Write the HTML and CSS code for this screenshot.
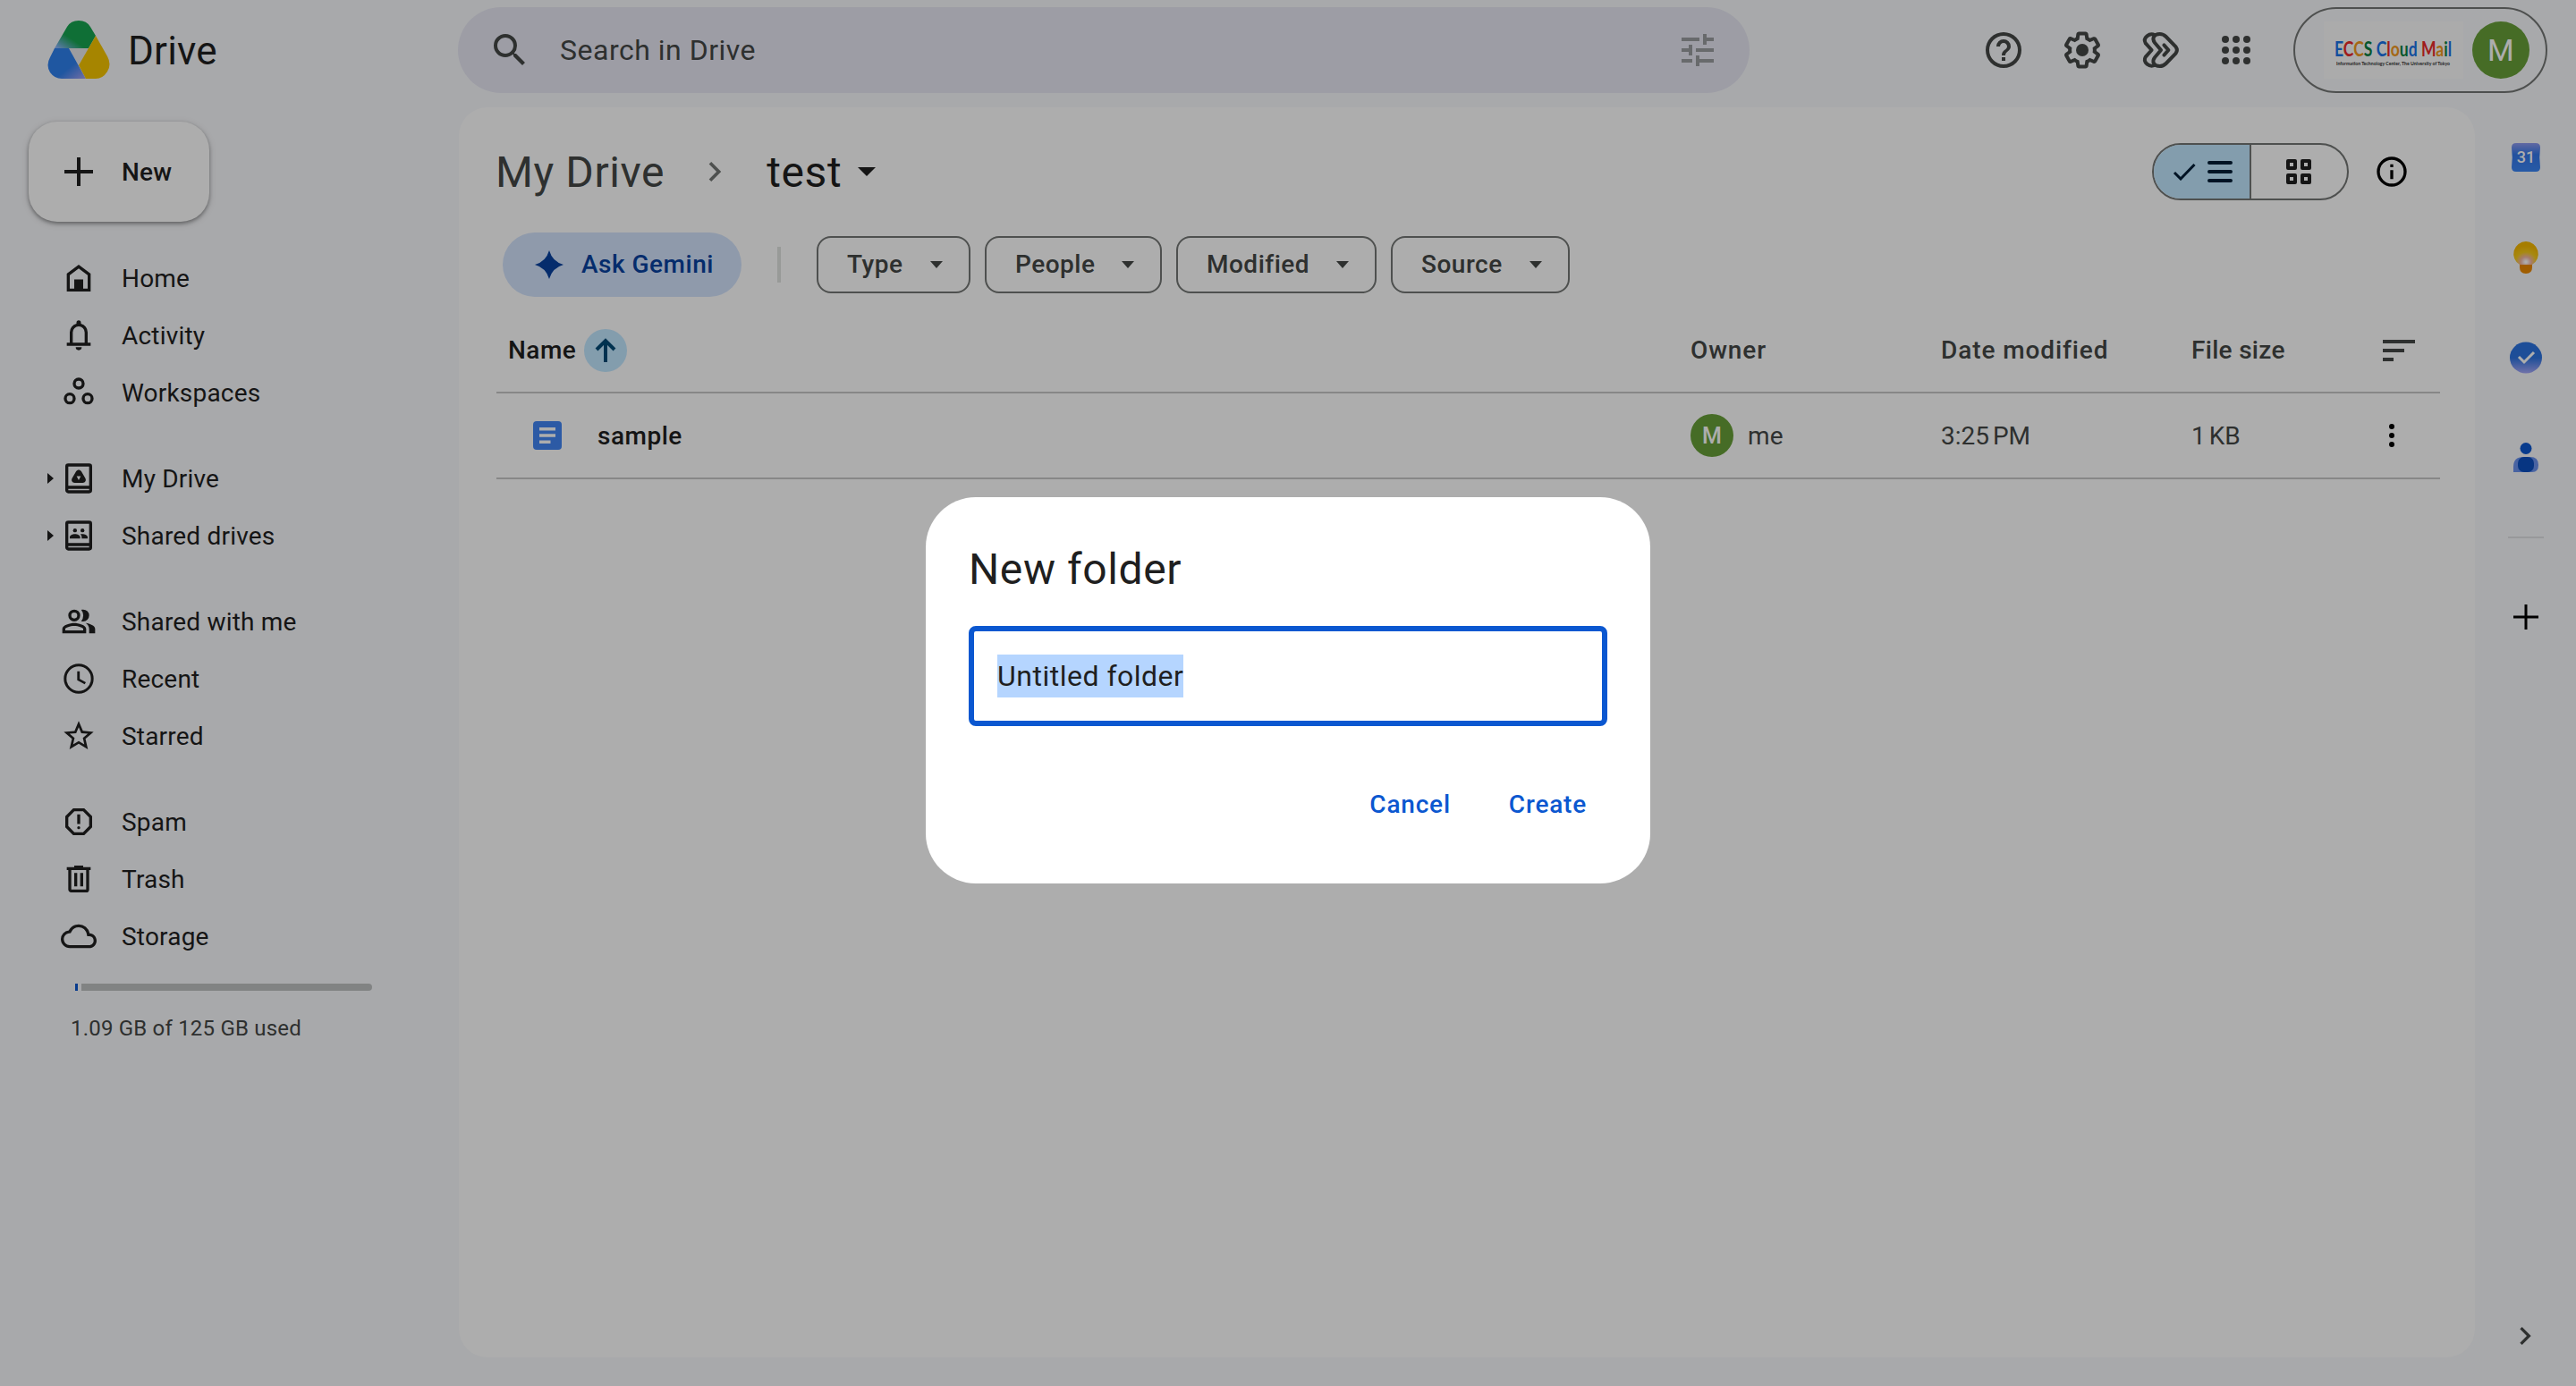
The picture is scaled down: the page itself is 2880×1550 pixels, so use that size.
FILE: index.html
```html
<!DOCTYPE html>
<html lang="en">
<head>
  <meta charset="UTF-8" />
  <meta name="viewport" content="width=device-width, initial-scale=1.0"/>
  <title>test - Google Drive</title>
  <link rel="stylesheet" href="styles.css">
</head>
<body>

  <header class="topbar">
    <div class="brand">
      <svg class="brand-logo" viewBox="0 0 70 66">
        <defs>
          <linearGradient id="gBlue" x1="0" y1="0" x2="1" y2="1">
            <stop offset="0.6" stop-color="#2f80ed"/>
            <stop offset="1" stop-color="#a9a4f5"/>
          </linearGradient>
          <linearGradient id="gGreen" x1="0" y1="1" x2="0.5" y2="0.5">
            <stop offset="0.1" stop-color="#86b4f8"/>
            <stop offset="0.75" stop-color="#17a450"/>
          </linearGradient>
        </defs>
        <path fill="#e8e8ea" d="M24 31h22L35 50z"/>
        <path fill="url(#gGreen)" d="M8 31 L22 7 Q26 0 35 0 Q44 0 48 7 L54 17 L46 31 Z"/>
        <path fill="url(#gBlue)" d="M8 31 H24 L43 65 H16 Q8 65 3 58 Q-2 50 3 41 Z"/>
        <path fill="#f5c400" d="M54 17 L67 40 Q72 49 67 57 Q62 65 54 65 H43 L35 50 Z"/>
      </svg>
      <span class="brand-name">Drive</span>
    </div>

    <div class="search">
      <svg class="icon" viewBox="0 0 24 24"><path d="M15.5 14h-.79l-.28-.27A6.47 6.47 0 0 0 16 9.5 6.5 6.5 0 1 0 9.5 16c1.61 0 3.09-.59 4.23-1.57l.27.28v.79l5 4.99L20.49 19l-4.99-5zm-6 0C7.01 14 5 11.99 5 9.5S7.01 5 9.5 5 14 7.01 14 9.5 11.99 14 9.5 14z"/></svg>
      <span class="search-text">Search in Drive</span>
      <svg class="icon tune" viewBox="0 0 24 24"><path d="M3 17v2h6v-2H3zM3 5v2h10V5H3zm10 16v-2h8v-2h-8v-2h-2v6h2zM7 9v2H3v2h4v2h2V9H7zm14 4v-2H11v2h10zm-6-4h2V7h4V5h-4V3h-2v6z"/></svg>
    </div>

    <div class="tools">
      <svg class="icon" viewBox="0 0 24 24"><path d="M11 18h2v-2h-2v2zm1-16a10 10 0 1 0 0 20 10 10 0 0 0 0-20zm0 18a8 8 0 1 1 0-16 8 8 0 0 1 0 16zm0-14a4 4 0 0 0-4 4h2c0-1.1.9-2 2-2s2 .9 2 2c0 2-3 1.75-3 5h2c0-2.25 3-2.5 3-5a4 4 0 0 0-4-4z"/></svg>
      <svg class="icon" viewBox="0 0 24 24"><path d="M13.85 22.25h-3.7c-.74 0-1.36-.54-1.45-1.27l-.27-1.89c-.27-.14-.53-.29-.79-.46l-1.8.72c-.7.26-1.47-.03-1.81-.65L2.2 15.53c-.35-.66-.2-1.44.36-1.88l1.53-1.19c-.01-.15-.02-.3-.02-.46 0-.15.01-.31.02-.46l-1.52-1.19c-.59-.45-.74-1.26-.37-1.88l1.85-3.19c.34-.62 1.11-.9 1.79-.63l1.81.73c.26-.17.52-.32.78-.46l.27-1.91c.09-.7.71-1.25 1.44-1.25h3.7c.74 0 1.36.54 1.45 1.27l.27 1.89c.27.14.53.29.79.46l1.8-.72c.71-.26 1.48.03 1.82.65l1.84 3.18c.36.66.2 1.44-.36 1.88l-1.52 1.19c.01.15.02.3.02.46s-.01.31-.02.46l1.52 1.19c.56.45.72 1.23.37 1.86l-1.86 3.22c-.34.62-1.11.9-1.8.63l-1.8-.72c-.26.17-.52.32-.78.46l-.27 1.91c-.1.68-.72 1.22-1.46 1.22zm-3.23-2h2.76l.37-2.55.53-.22c.44-.18.88-.44 1.34-.78l.45-.34 2.38.96 1.38-2.4-2.03-1.58.07-.56c.03-.26.06-.51.06-.78s-.03-.53-.06-.78l-.07-.56 2.03-1.58-1.39-2.4-2.39.96-.45-.35c-.42-.32-.87-.58-1.33-.77l-.52-.22-.37-2.55h-2.76l-.37 2.55-.53.21c-.44.19-.88.44-1.34.79l-.45.33-2.38-.95-1.39 2.39 2.03 1.58-.07.56a7 7 0 0 0-.06.79c0 .26.02.53.06.78l.07.56-2.03 1.58 1.38 2.4 2.39-.96.45.35c.43.33.86.58 1.33.77l.53.22.38 2.55z"/><circle cx="12" cy="12" r="3.5"/></svg>
      <svg class="icon line" viewBox="0 0 24 24"><path d="M8.600 3.600C5.600 2.200 1.600 5 3.400 8.200L6.800 12l-3.400 3.800c-1.800 3.200 2.200 6 5.200 4.600"/><path d="M12 12 8.600 8C6.500 5.400 8.300 3 11.300 3c1.600 0 2.500.5 3.500 1.500l5.500 5.700q1.300 1.800 0 3.600l-5.500 5.700c-1 1-1.900 1.500-3.500 1.500-3 0-4.800-2.400-2.700-5z"/><path d="M13.700 9.200l2.500 2.800-2.500 2.800"/></svg>
      <svg class="icon" viewBox="0 0 24 24"><circle cx="6" cy="6" r="2"/><circle cx="12" cy="6" r="2"/><circle cx="18" cy="6" r="2"/><circle cx="6" cy="12" r="2"/><circle cx="12" cy="12" r="2"/><circle cx="18" cy="12" r="2"/><circle cx="6" cy="18" r="2"/><circle cx="12" cy="18" r="2"/><circle cx="18" cy="18" r="2"/></svg>
    </div>

    <div class="account">
      <svg class="org-logo" viewBox="0 0 156 64">
        <text x="12" y="39" font-size="22" font-weight="700" textLength="131" lengthAdjust="spacingAndGlyphs"><tspan fill="#1a73e8">E</tspan><tspan fill="#ea2a2a">C</tspan><tspan fill="#f29a1f">C</tspan><tspan fill="#0b8043">S</tspan> <tspan fill="#1a73e8">C</tspan><tspan fill="#ea2a2a">l</tspan><tspan fill="#f29a1f">o</tspan><tspan fill="#0b8043">u</tspan><tspan fill="#1a73e8">d</tspan> <tspan fill="#ea2a2a">M</tspan><tspan fill="#f29a1f">a</tspan><tspan fill="#0b8043">i</tspan><tspan fill="#1a73e8">l</tspan></text>
        <text x="14" y="49" font-size="5.500" font-weight="700" fill="#333" textLength="127" lengthAdjust="spacingAndGlyphs">Information Technology Center, The University of Tokyo</text>
      </svg>
      <span class="avatar">M</span>
    </div>
  </header>

  <div class="layout">
    <aside class="sidebar">
      <button class="new-btn">
        <svg class="icon" viewBox="0 0 24 24"><path d="M20 13h-7v7h-2v-7H4v-2h7V4h2v7h7v2z"/></svg>
        New
      </button>

      <nav class="nav-group">
        <a class="nav-item"><svg class="icon" viewBox="0 0 24 24"><path d="M12 3 4 9v12h16V9l-8-6zm6 16h-3v-6H9v6H6v-9l6-4.500 6 4.500v9z"/><path d="M9 13h6v7H9z"/></svg>Home</a>
        <a class="nav-item"><svg class="icon" viewBox="0 0 24 24"><path d="M4 19v-2h2v-7a6 6 0 0 1 4.500-5.800V3.500a1.500 1.500 0 0 1 3 0v.7A6 6 0 0 1 18 10v7h2v2H4zm8 3a2 2 0 0 1-2-2h4a2 2 0 0 1-2 2zm-4-5h8v-7a4 4 0 0 0-8 0v7z"/></svg>Activity</a>
        <a class="nav-item"><svg class="icon line" viewBox="0 0 24 24"><circle cx="12" cy="6" r="3"/><circle cx="6" cy="16" r="3"/><circle cx="18" cy="16" r="3"/></svg>Workspaces</a>
      </nav>

      <nav class="nav-group">
        <a class="nav-item expandable"><svg class="icon" viewBox="0 0 24 24"><path d="M19 2H5a2 2 0 0 0-2 2v16c0 1.100.9 2 2 2h14a2 2 0 0 0 2-2V4a2 2 0 0 0-2-2zm0 18H5v-1h14v1zm0-3H5V4h14v13z"/><path fill-rule="evenodd" d="M10.300 7.200c.8-1.300 2.600-1.300 3.400 0l2.700 4.700c.9 1.500-.1 3.100-1.700 3.100H9.300c-1.600 0-2.600-1.600-1.700-3.100zM10.600 10.500l1.400 2.700 1.400-2.700z"/></svg>My Drive</a>
        <a class="nav-item expandable"><svg class="icon" viewBox="0 0 24 24"><path d="M19 2H5a2 2 0 0 0-2 2v16c0 1.100.9 2 2 2h14a2 2 0 0 0 2-2V4a2 2 0 0 0-2-2zm0 18H5v-1h14v1zm0-3H5V4h14v13z"/><circle cx="9.500" cy="8.500" r="1.300"/><circle cx="14.500" cy="8.500" r="1.300"/><path d="M6 14v-.8c0-1.500 1.800-2.200 3.500-2.200s3.500.7 3.500 2.200v.8zM14 14v-1c0-.8-.3-1.400-.9-1.900 2.200-.4 4.900.4 4.900 2.100v.8z"/></svg>Shared drives</a>
      </nav>

      <nav class="nav-group">
        <a class="nav-item"><svg class="icon" viewBox="0 0 24 24"><path d="M9 12a4 4 0 1 0 0-8 4 4 0 0 0 0 8zm0-6a2 2 0 1 1 0 4 2 2 0 0 1 0-4zm0 7c-2.700 0-8 1.300-8 4v3h16v-3c0-2.700-5.300-4-8-4zm6 5H3v-1c0-.7 3.200-2 6-2s6 1.300 6 2v1zM15 12a4 4 0 0 0 0-8c-.5 0-.9.100-1.300.2a6 6 0 0 1 0 7.600c.4.100.8.2 1.300.2zM16.700 13.100C18 14 19 15.300 19 17v3h4v-3c0-2.200-3.500-3.500-6.300-3.900z"/></svg>Shared with me</a>
        <a class="nav-item"><svg class="icon" viewBox="0 0 24 24"><path d="M12 2a10 10 0 1 0 0 20 10 10 0 0 0 0-20zm0 18.200a8.200 8.200 0 1 1 0-16.400 8.200 8.200 0 0 1 0 16.400zM12.700 7H11v6l5 2.700.8-1.300-4.100-2.300V7z"/></svg>Recent</a>
        <a class="nav-item"><svg class="icon" viewBox="0 0 24 24"><path d="m22 9.240-7.190-.62L12 2 9.190 8.630 2 9.240l5.460 4.730L5.820 21 12 17.270 18.180 21l-1.630-7.030L22 9.240zM12 15.400l-3.760 2.270 1-4.280-3.320-2.880 4.380-.38L12 6.100l1.710 4.040 4.380.38-3.320 2.880 1 4.280L12 15.400z"/></svg>Starred</a>
      </nav>

      <nav class="nav-group">
        <a class="nav-item"><svg class="icon" viewBox="0 0 24 24"><path d="M15.730 3H8.270L3 8.270v7.460L8.270 21h7.460L21 15.730V8.270L15.730 3zM19 14.900 14.900 19H9.100L5 14.900V9.100L9.100 5h5.800L19 9.100v5.800zM11 7h2v6.500h-2z"/><circle cx="12" cy="16" r="1"/></svg>Spam</a>
        <a class="nav-item"><svg class="icon" viewBox="0 0 24 24"><path d="M15 4V3H9v1H4v2h1v13c0 1.100.9 2 2 2h10a2 2 0 0 0 2-2V6h1V4h-5zm2 15H7V6h10v13zM9 8h2v9H9zm4 0h2v9h-2z"/></svg>Trash</a>
        <a class="nav-item"><svg class="icon" viewBox="0 0 24 24"><path d="M19.350 10.040A7.490 7.490 0 0 0 12 4C9.110 4 6.600 5.640 5.350 8.040A5.994 5.994 0 0 0 0 14c0 3.310 2.690 6 6 6h13c2.760 0 5-2.240 5-5 0-2.640-2.050-4.780-4.650-4.960zM19 18H6c-2.210 0-4-1.790-4-4 0-2.050 1.530-3.760 3.560-3.970l1.070-.11.5-.95A5.469 5.469 0 0 1 12 6c2.620 0 4.880 1.860 5.390 4.430l.3 1.500 1.530.11A2.980 2.980 0 0 1 22 15c0 1.650-1.350 3-3 3z"/></svg>Storage</a>
      </nav>

      <div class="quota">
        <div class="quota-bar"><span class="quota-used"></span><span class="quota-free"></span></div>
        <div class="quota-text">1.09 GB of 125 GB used</div>
      </div>
    </aside>

    <main class="panel">
      <div class="path">
        <span class="crumb">My Drive</span>
        <svg class="crumb-sep" viewBox="0 0 24 24"><path d="M9.400 18 8 16.600l4.600-4.600L8 7.400 9.400 6l6 6z"/></svg>
        <span class="crumb current">test</span>
        <span class="caret big"></span>
        <div class="view-toggle">
          <div class="view active">
            <svg class="check" viewBox="0 0 26 20"><path d="M2 11l7 7L24.500 2"/></svg>
            <svg class="list" viewBox="0 0 28 24"><path d="M2 2h24M2 12h24M2 22h24"/></svg>
          </div>
          <div class="view">
            <svg class="grid" viewBox="0 0 28 28"><rect x="2" y="2" width="8" height="8"/><rect x="18" y="2" width="8" height="8"/><rect x="2" y="18" width="8" height="8"/><rect x="18" y="18" width="8" height="8"/></svg>
          </div>
        </div>
        <svg class="info" viewBox="0 0 24 24"><path d="M11 7h2v2h-2zm0 4h2v6h-2zm1-9a10 10 0 1 0 0 20 10 10 0 0 0 0-20zm0 18a8 8 0 1 1 0-16 8 8 0 0 1 0 16z"/></svg>
      </div>

      <div class="filters">
        <button class="gemini">
          <svg viewBox="0 0 32 32"><path d="M16 0Q19.500 12.500 32 16 19.500 19.500 16 32 12.500 19.500 0 16 12.500 12.500 16 0z"/></svg>
          <span>Ask Gemini</span>
        </button>
        <span class="divider"></span>
        <button class="chip type"><span>Type</span><i class="caret"></i></button>
        <button class="chip people"><span>People</span><i class="caret"></i></button>
        <button class="chip modified"><span>Modified</span><i class="caret"></i></button>
        <button class="chip source"><span>Source</span><i class="caret"></i></button>
      </div>

      <div class="row head">
        <div class="name"><span>Name</span>
          <span class="sort-dir"><svg viewBox="0 0 24 28"><path d="M12 27V3M2 13 12 3l10 10"/></svg></span>
        </div>
        <div>Owner</div>
        <div>Date modified</div>
        <div class="size">File size</div>
        <svg class="sort" viewBox="0 0 36 24"><path d="M0 0h36v4H0zM0 10h24v4H0zM0 20h12v4H0z"/></svg>
      </div>
      <div class="row file">
        <div class="name">
          <svg class="doc" viewBox="0 0 32 32"><rect width="32" height="32" rx="4" fill="#4285f4"/><path fill="#fff" d="M7 7h18v3.500H7zM7 14.200h18v3.500H7zM7 21.500h12.500V25H7z"/></svg>
          <span>sample</span>
        </div>
        <div class="owner"><span class="avatar small">M</span>me</div>
        <div class="value">3:25 PM</div>
        <div class="value">1 KB</div>
        <svg class="more" viewBox="0 0 6 26"><circle cx="3" cy="3" r="3"/><circle cx="3" cy="13" r="3"/><circle cx="3" cy="23" r="3"/></svg>
      </div>
    </main>

    <aside class="rail">
      <svg class="app" viewBox="0 0 40 40">
        <defs><linearGradient id="gCal" x1="0" y1="0" x2="0" y2="1"><stop offset="0" stop-color="#8f9bf0"/><stop offset="0.4" stop-color="#3478ea"/><stop offset="1" stop-color="#3a85f5"/></linearGradient></defs>
        <path fill="url(#gCal)" d="M9 4h22q5 0 5 5-1.500 11 0 22 0 5-5 5H9q-5 0-5-5 1.500-11 0-22 0-5 5-5z"/>
        <text x="20" y="26" font-size="18" fill="#fff" text-anchor="middle" font-weight="500">31</text>
      </svg>
      <svg class="app" viewBox="0 0 40 40">
        <defs><radialGradient id="gKeep" cx="0.5" cy="0.88" r="0.7"><stop offset="0.05" stop-color="#fff"/><stop offset="0.3" stop-color="#f3b7a5"/><stop offset="0.6" stop-color="#f7cb1b"/><stop offset="1" stop-color="#f5b800"/></radialGradient></defs>
        <path fill="url(#gKeep)" d="M20 2a14 14 0 0 0-7 26h14A14 14 0 0 0 20 2z"/>
        <path fill="#ec8a00" d="M13 28h14v3q0 7-7 7t-7-7z"/>
      </svg>
      <svg class="app" viewBox="0 0 40 40">
        <defs><linearGradient id="gTask" x1="0" y1="0" x2="0" y2="1"><stop offset="0.5" stop-color="#2b73e0"/><stop offset="1" stop-color="#a6a8fa"/></linearGradient></defs>
        <ellipse cx="20" cy="20" rx="18" ry="17.500" fill="url(#gTask)"/>
        <path d="M12 19l6 6 11-11" fill="none" stroke="#fff" stroke-width="3"/>
      </svg>
      <svg class="app" viewBox="0 0 40 40">
        <circle cx="20" cy="9.500" r="6.500" fill="#0b57d0"/>
        <path fill="#6b93ef" d="M6 36v-6q0-11 11-11h8q9 0 9 9 0 8-7 8z"/>
        <rect x="11" y="19" width="18" height="17" rx="7" fill="#0b4fc0"/>
      </svg>
      <span class="rail-line"></span>
      <svg class="rail-plus" viewBox="0 0 28 28"><path d="M12.500 0h3v12.500H28v3H15.500V28h-3V15.500H0v-3h12.500z"/></svg>
      <svg class="rail-collapse" viewBox="0 0 24 24"><path d="M9.400 18 8 16.600l4.600-4.600L8 7.400 9.400 6l6 6z"/></svg>
    </aside>
  </div>

  <div class="scrim">
    <div class="dialog">
      <h1 class="dialog-title">New folder</h1>
      <div class="field"><span class="selected">Untitled folder</span></div>
      <div class="actions">
        <button>Cancel</button>
        <button>Create</button>
      </div>
    </div>
  </div>

</body>
</html>
```
FILE: styles.css
```css
* {
  box-sizing: border-box;
}

body {
  margin: 0;
  width: 2880px;
  height: 1550px;
  overflow: hidden;
  font-family: Roboto, sans-serif;
  font-size: 28px;
  letter-spacing: 0.2px;
  color: #1f1f1f;
  background: #f8f9fc;
}

button {
  font: inherit;
  letter-spacing: inherit;
  border: none;
  background: none;
  padding: 0;
  cursor: pointer;
}

.icon {
  width: 48px;
  height: 48px;
  flex: none;
  fill: currentColor;
}

.icon.line {
  fill: none;
  stroke: currentColor;
  stroke-width: 2;
  stroke-linecap: round;
  stroke-linejoin: round;
}

/* top bar */
.topbar {
  display: flex;
  align-items: center;
  height: 120px;
  padding: 0 32px 8px 53px;
}

.brand {
  display: flex;
  align-items: center;
  width: 459px;
  gap: 20px;
}

.brand-logo {
  width: 70px;
  height: 66px;
}

.brand-name {
  padding-top: 2px;
  font-size: 44px;
}

.search {
  display: flex;
  align-items: center;
  width: 1444px;
  height: 96px;
  padding: 0 34px;
  border-radius: 48px;
  background: #e7e8f4;
  color: #444746;
}

.search-text {
  flex: 1;
  margin-left: 32px;
  font-size: 32px;
  letter-spacing: 0.5px;
}

.tune {
  color: #9a9c9f;
}

.tools {
  display: flex;
  gap: 40px;
  margin-left: 260px;
  color: #444746;
}

.tools .icon:last-child {
  margin-left: -4px;
}

.account {
  display: flex;
  align-items: center;
  width: 284px;
  height: 96px;
  margin-left: 40px;
  padding: 0 18px 0 32px;
  gap: 10px;
  border: 2px solid #747775;
  border-radius: 48px;
}

.org-logo {
  width: 156px;
  height: 64px;
  background: #fdfdfd;
  font-family: Lato, sans-serif;
  letter-spacing: 0;
}

.avatar {
  display: flex;
  align-items: center;
  justify-content: center;
  width: 64px;
  height: 64px;
  border-radius: 50%;
  background: #689f38;
  color: #fff;
  font-size: 34px;
}

.avatar.small {
  width: 48px;
  height: 48px;
  font-size: 25px;
  font-weight: 500;
}

/* left navigation */
.layout {
  display: flex;
  height: 1430px;
}

.sidebar {
  width: 513px;
  padding-top: 16px;
}

.new-btn {
  display: flex;
  align-items: center;
  gap: 24px;
  width: 202px;
  height: 112px;
  margin: 0 0 31px 32px;
  padding-left: 32px;
  border-radius: 32px;
  background: #fff;
  color: #1f1f1f;
  font-weight: 500;
  box-shadow: 0 2px 4px rgba(0, 0, 0, 0.35), 0 2px 8px rgba(0, 0, 0, 0.15);
}

.nav-group {
  margin-bottom: 32px;
}

.nav-item {
  display: flex;
  align-items: center;
  gap: 28px;
  height: 64px;
  padding-left: 68px;
}

.nav-item .icon {
  width: 40px;
  height: 40px;
}

.nav-item.expandable {
  padding-left: 53px;
  gap: 0;
}

.nav-item.expandable::before {
  content: "";
  border: 6px solid transparent;
  border-left: 7px solid currentColor;
  border-right: none;
}

.nav-item.expandable .icon {
  margin: 0 28px 0 8px;
}

.quota {
  padding-left: 79px;
}

.quota-bar {
  display: flex;
  gap: 4px;
  margin: -11px 0 28px 5px;
}

.quota-used {
  width: 3px;
  height: 8px;
  background: #0b57d0;
}

.quota-free {
  width: 325px;
  height: 8px;
  border-radius: 0 4px 4px 0;
  background: #bfc2c2;
}

.quota-text {
  font-size: 24px;
  color: #444746;
}

/* file panel */
.panel {
  width: 2254px;
  height: 1398px;
  padding: 24px 39px 0 42px;
  border-radius: 32px;
  background: #fff;
}

.path {
  display: flex;
  align-items: center;
  height: 96px;
}

.crumb {
  margin-left: -1px;
  font-size: 48px;
  letter-spacing: 0.6px;
  color: #444746;
}

.crumb.current {
  color: #1f1f1f;
}

.crumb-sep {
  width: 44px;
  height: 44px;
  margin: 0 36px 0 35px;
  fill: #747775;
}

.caret {
  border: 7px solid transparent;
  border-top: 8px solid currentColor;
  border-bottom: none;
}

.caret.big {
  margin-left: 18px;
  border-width: 10px 10px 0;
}

.view-toggle {
  display: flex;
  width: 220px;
  height: 64px;
  margin-left: auto;
  border: 2px solid #747775;
  border-radius: 32px;
  overflow: hidden;
}

.view {
  display: flex;
  align-items: center;
  justify-content: center;
  width: 50%;
  gap: 13px;
}

.view.active {
  width: 109px;
  padding-left: 2px;
  background: #c2e7ff;
  border-right: 2px solid #747775;
}

.check,
.list,
.grid {
  fill: none;
  stroke: #1f1f1f;
  stroke-width: 4;
}

.check {
  width: 26px;
  height: 20px;
  stroke: #001d35;
  stroke-width: 3;
}

.list {
  width: 28px;
  height: 24px;
  stroke: #001d35;
  stroke-linecap: round;
}

.grid {
  width: 28px;
  height: 28px;
  stroke-linejoin: round;
}

.info {
  width: 40px;
  height: 40px;
  margin: 0 34px 0 28px;
}

.filters {
  display: flex;
  align-items: center;
  height: 72px;
  margin: 20px 0 0 7px;
  gap: 16px;
  font-weight: 500;
  letter-spacing: 0.5px;
}

.filters button span {
  padding-bottom: 1px;
}

.gemini {
  display: flex;
  align-items: center;
  width: 267px;
  height: 72px;
  padding-left: 36px;
  gap: 20px;
  border-radius: 36px;
  background: #d3e3fd;
  color: #0842a0;
}

.gemini svg {
  width: 32px;
  height: 32px;
  fill: currentColor;
}

.divider {
  width: 4px;
  height: 40px;
  margin: 0 24px;
  background: #e1e3e1;
}

.chip {
  display: flex;
  align-items: center;
  justify-content: space-between;
  height: 64px;
  padding: 0 29px 0 32px;
  border: 2px solid #747775;
  border-radius: 16px;
  color: #444746;
}

.type { width: 172px; }
.people { width: 198px; }
.modified { width: 224px; }
.source { width: 200px; }

.row {
  display: grid;
  grid-template-columns: 1335px 280px 280px 210px auto;
  align-items: center;
  justify-content: start;
  height: 96px;
  border-bottom: 2px solid #c7c7c7;
  color: #444746;
}

.row.head {
  height: 108px;
  padding-top: 13px;
  font-weight: 500;
  letter-spacing: 0.9px;
}

.row.head .size {
  letter-spacing: 0.3px;
}

.name {
  display: flex;
  align-items: center;
  color: #1f1f1f;
  font-weight: 500;
  letter-spacing: 0.5px;
}

.head .name {
  padding-left: 13px;
  gap: 9px;
}

.file .name {
  padding-left: 41px;
  gap: 40px;
}

.value {
  letter-spacing: 0;
  word-spacing: -3px;
}

.sort-dir {
  display: flex;
  align-items: center;
  justify-content: center;
  width: 48px;
  height: 48px;
  border-radius: 50%;
  background: #c2e7ff;
}

.sort-dir svg {
  width: 24px;
  height: 28px;
  fill: none;
  stroke: #004a77;
  stroke-width: 4;
}

.sort {
  width: 36px;
  height: 24px;
  fill: #444746;
  margin-left: 4px;
}

.doc {
  width: 32px;
  height: 32px;
}

.owner {
  display: flex;
  align-items: center;
  gap: 16px;
}

.more {
  width: 6px;
  height: 26px;
  margin-left: 11px;
}

/* right rail */
.rail {
  display: flex;
  flex-direction: column;
  align-items: center;
  width: 113px;
  padding-top: 36px;
}

.app {
  width: 40px;
  height: 40px;
  margin-bottom: 72px;
  letter-spacing: 0;
}

.rail-line {
  width: 40px;
  height: 2px;
  margin: -4px 0 74px;
  background: #e0e2e5;
}

.rail-plus {
  width: 28px;
  height: 28px;
}

.rail-collapse {
  width: 40px;
  height: 40px;
  margin: auto 0 36px;
  fill: #444746;
}

/* new folder dialog */
.scrim {
  position: fixed;
  inset: 0;
  display: flex;
  align-items: center;
  justify-content: center;
  padding-bottom: 6px;
  background: rgba(0, 0, 0, 0.32);
}

.dialog {
  width: 810px;
  height: 432px;
  padding: 48px;
  border-radius: 56px;
  background: #fff;
}

.dialog-title {
  margin: 0;
  padding-top: 1px;
  height: 96px;
  line-height: 64px;
  font-size: 48px;
  font-weight: 400;
  letter-spacing: 0.6px;
}

.field {
  display: flex;
  align-items: center;
  height: 112px;
  padding-left: 26px;
  border: 6px solid #0b57d0;
  border-radius: 8px;
  font-size: 32px;
  letter-spacing: 0.5px;
}

.selected {
  line-height: 48px;
  background: #b5d5ff;
}

.actions {
  display: flex;
  justify-content: flex-end;
  gap: 65px;
  margin-top: 47px;
  padding-right: 23px;
}

.actions button {
  height: 80px;
  color: #0b57d0;
  font-weight: 500;
  letter-spacing: 0.8px;
}
```
